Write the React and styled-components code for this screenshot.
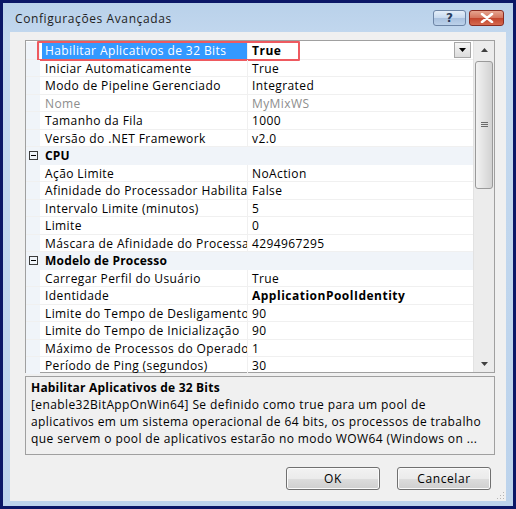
import styled, { createGlobalStyle } from "styled-components";

const GlobalStyle = createGlobalStyle`
  html, body {
    margin: 0;
    padding: 0;
    background: #ffffff;
  }
  body {
    font-family: "Open Sans", "Noto Sans", sans-serif;
  }
`;

const sections = [
  {
    title: null,
    rows: [
      { name: "Habilitar Aplicativos de 32 Bits", value: "True", selected: true },
      { name: "Iniciar Automaticamente", value: "True" },
      { name: "Modo de Pipeline Gerenciado", value: "Integrated" },
      { name: "Nome", value: "MyMixWS", disabled: true },
      { name: "Tamanho da Fila", value: "1000" },
      { name: "Versão do .NET Framework", value: "v2.0" },
    ],
  },
  {
    title: "CPU",
    rows: [
      { name: "Ação Limite", value: "NoAction" },
      { name: "Afinidade do Processador Habilitada", value: "False" },
      { name: "Intervalo Limite (minutos)", value: "5" },
      { name: "Limite", value: "0" },
      { name: "Máscara de Afinidade do Processador", value: "4294967295" },
    ],
  },
  {
    title: "Modelo de Processo",
    rows: [
      { name: "Carregar Perfil do Usuário", value: "True" },
      { name: "Identidade", value: "ApplicationPoolIdentity", bold: true },
      { name: "Limite do Tempo de Desligamento", value: "90" },
      { name: "Limite do Tempo de Inicialização", value: "90" },
      { name: "Máximo de Processos do Operador", value: "1" },
      { name: "Período de Ping (segundos)", value: "30" },
    ],
  },
];

export default function App() {
  return (
    <>
      <GlobalStyle />
      <Frame>
        <TitleBar>
          <Caption>Configurações Avançadas</Caption>
          <CaptionButtons>
            <HelpButton>?</HelpButton>
            <CloseButton>
              <svg width="14" height="10" viewBox="0 0 14 10">
                <path d="M2 1 L12 9 M12 1 L2 9" stroke="#ffffff" strokeWidth="2.6" strokeLinecap="round" />
              </svg>
            </CloseButton>
          </CaptionButtons>
        </TitleBar>
        <Client>
          <Grid>
            <Rows>
              {sections.map((section, i) => (
                <div key={i}>
                  {section.title && (
                    <CategoryRow>
                      <Gutter>
                        <Toggle />
                      </Gutter>
                      <CategoryName>{section.title}</CategoryName>
                    </CategoryRow>
                  )}
                  {section.rows.map((row) => (
                    <Row key={row.name}>
                      <Gutter />
                      <NameCell $selected={row.selected} $disabled={row.disabled}>
                        {row.name}
                      </NameCell>
                      <ValueCell $bold={row.bold || row.selected} $disabled={row.disabled}>
                        {row.value}
                        {row.selected && (
                          <DropButton>
                            <svg width="7" height="4" viewBox="0 0 7 4">
                              <path d="M0 0 H7 L3.5 4 Z" fill="#000" />
                            </svg>
                          </DropButton>
                        )}
                      </ValueCell>
                      {row.selected && <Highlight />}
                    </Row>
                  ))}
                </div>
              ))}
            </Rows>
            <ScrollBar>
              <Arrow>
                <svg width="7" height="4" viewBox="0 0 7 4">
                  <path d="M0 4 H7 L3.5 0 Z" fill="#404040" />
                </svg>
              </Arrow>
              <Track>
                <Thumb>
                  <Grip />
                </Thumb>
              </Track>
              <Arrow>
                <svg width="7" height="4" viewBox="0 0 7 4">
                  <path d="M0 0 H7 L3.5 4 Z" fill="#404040" />
                </svg>
              </Arrow>
            </ScrollBar>
          </Grid>
          <Description>
            <DescTitle>Habilitar Aplicativos de 32 Bits</DescTitle>
            <DescText>
              [enable32BitAppOnWin64] Se definido como true para um pool de
              <br />
              aplicativos em um sistema operacional de 64 bits, os processos de trabalho
              <br />
              que servem o pool de aplicativos estarão no modo WOW64 (Windows on ...
            </DescText>
          </Description>
          <Footer>
            <Button>OK</Button>
            <Button>Cancelar</Button>
          </Footer>
          <SizeGrip />
        </Client>
      </Frame>
    </>
  );
}

const Frame = styled.div`
  width: 516px;
  height: 509px;
  box-sizing: border-box;
  border: 3px solid #0b1767;
  background: linear-gradient(#b9d1ea, #c4d9ef 40px, #bcd3ec);
  display: flex;
  flex-direction: column;
`;

const TitleBar = styled.div`
  height: 29px;
  display: flex;
  align-items: center;
  justify-content: space-between;
  padding: 0 9px 0 12px;
  box-sizing: border-box;
`;

const Caption = styled.div`
  font-size: 12px;
  color: #1e1e1e;
  letter-spacing: 0.6px;
  margin-top: 2px;
`;

const CaptionButtons = styled.div`
  display: flex;
  gap: 3px;
`;

const HelpButton = styled.div`
  width: 33px;
  height: 16px;
  box-sizing: border-box;
  border: 1px solid #6d85a6;
  border-radius: 3px;
  background: linear-gradient(#e4eef9, #c7d9ee 50%, #a9c1df 51%, #bcd2ea);
  color: #2a3d5c;
  font-size: 12px;
  font-weight: bold;
  line-height: 14px;
  text-align: center;
  font-family: "DejaVu Sans", sans-serif;
`;

const CloseButton = styled.div`
  width: 35px;
  height: 16px;
  box-sizing: border-box;
  border: 1px solid #8a2c22;
  border-radius: 3px;
  background: linear-gradient(#e6a48f, #d4735c 50%, #c2432b 51%, #d56a4f);
  display: flex;
  align-items: center;
  justify-content: center;
`;

const Client = styled.div`
  position: relative;
  flex: 1;
  margin: 0 7px 5px;
  background: #f0f0f0;
  display: flex;
  flex-direction: column;
  padding: 8px 11px 0 15px;
`;

const Grid = styled.div`
  height: 333px;
  box-sizing: border-box;
  border: 1px solid #a0a0a0;
  background: #ffffff;
  display: flex;
  padding-top: 1px;
`;

const Rows = styled.div`
  flex: 1;
  min-width: 0;
  font-size: 12px;
  letter-spacing: 0.4px;
`;

const Row = styled.div`
  position: relative;
  height: 17.5px;
  display: flex;
  box-sizing: border-box;
  border-bottom: 1px solid #f0f0f0;
`;

const CategoryRow = styled(Row)`
  background: #f0f4f9;
  border-bottom-color: #f0f4f9;
`;

const Gutter = styled.div`
  width: 14px;
  flex: none;
  background: #f0f4f9;
  display: flex;
  align-items: center;
  justify-content: center;
`;

const Toggle = styled.div`
  position: relative;
  width: 9px;
  height: 9px;
  box-sizing: border-box;
  border: 1px solid #3c3c3c;
  margin-left: 1px;

  &::after {
    content: "";
    position: absolute;
    left: 1px;
    right: 1px;
    top: 3px;
    height: 1px;
    background: #000;
  }
`;

const CategoryName = styled.div`
  padding-left: 5px;
  font-weight: bold;
  line-height: 17px;
  color: #000;
  letter-spacing: 0.2px;
`;

const NameCell = styled.div`
  width: 208px;
  flex: none;
  box-sizing: border-box;
  border-right: 1px solid #f0f0f0;
  padding-left: 5px;
  white-space: nowrap;
  overflow: hidden;
  line-height: 17px;
  color: ${(p) => (p.$selected ? "#ffffff" : p.$disabled ? "#8d8d8d" : "#000000")};
  background: ${(p) => (p.$selected ? "linear-gradient(90deg, #ffffff 2px, #3399ff 2px)" : "transparent")};
`;

const ValueCell = styled.div`
  position: relative;
  flex: 1;
  padding-left: 4px;
  white-space: nowrap;
  overflow: hidden;
  line-height: 17px;
  font-weight: ${(p) => (p.$bold ? "bold" : "normal")};
  letter-spacing: ${(p) => (p.$bold ? "0.5px" : "0.4px")};
  color: ${(p) => (p.$disabled ? "#8d8d8d" : "#000000")};
`;

const DropButton = styled.div`
  position: absolute;
  right: 2px;
  top: 0;
  width: 17px;
  height: 16px;
  box-sizing: border-box;
  border: 1px solid #a7a7a7;
  background: linear-gradient(#f5f5f5, #dcdcdc);
  display: flex;
  align-items: center;
  justify-content: center;
`;

const Highlight = styled.div`
  position: absolute;
  left: 11px;
  top: -1px;
  width: 263px;
  height: 20px;
  box-sizing: border-box;
  border: 2px solid #ee5a60;
  border-radius: 1px;
  pointer-events: none;
`;

const ScrollBar = styled.div`
  width: 20px;
  flex: none;
  margin-top: -1px;
  background: #ececec;
  border-left: 1px solid #e2e2e2;
  display: flex;
  flex-direction: column;
`;

const Arrow = styled.div`
  height: 17px;
  display: flex;
  align-items: center;
  justify-content: center;
`;

const Track = styled.div`
  flex: 1;
  padding: 3px 1px;
`;

const Thumb = styled.div`
  height: 128px;
  box-sizing: border-box;
  border: 1px solid #9a9a9a;
  border-radius: 3px;
  background: linear-gradient(90deg, #f2f2f2, #e2e2e2 50%, #d2d2d2);
  display: flex;
  align-items: center;
  justify-content: center;
`;

const Grip = styled.div`
  width: 7px;
  height: 6px;
  background: repeating-linear-gradient(#6b6b6b 0 1px, transparent 1px 2px);
`;

const Description = styled.div`
  margin-top: 3px;
  height: 79px;
  box-sizing: border-box;
  border: 1px solid #a0a0a0;
  padding: 2px 5px;
  color: #000;
  font-size: 12px;
  letter-spacing: 0.4px;
  white-space: nowrap;
`;

const DescTitle = styled.div`
  font-weight: bold;
  line-height: 17px;
  letter-spacing: 0.2px;
`;

const DescText = styled.div`
  line-height: 17px;
`;

const Footer = styled.div`
  display: flex;
  justify-content: flex-end;
  gap: 17px;
  margin-top: 12px;
  padding-right: 4px;
`;

const Button = styled.div`
  width: 94px;
  height: 23px;
  box-sizing: border-box;
  border: 1px solid #707070;
  border-radius: 3px;
  background: linear-gradient(#f2f2f2, #ebebeb 50%, #dddddd 51%, #cfcfcf);
  box-shadow: inset 0 0 0 1px #fbfbfb;
  font-size: 12px;
  line-height: 21px;
  text-align: center;
  color: #000;
  letter-spacing: 0.6px;
`;

const SizeGrip = styled.div`
  position: absolute;
  right: 2px;
  bottom: 2px;
  width: 8px;
  height: 8px;
  background: radial-gradient(circle, #b4b4b4 0.8px, transparent 1px) 0 0 / 3px 3px;
  clip-path: polygon(100% 0, 100% 100%, 0 100%);
`;
